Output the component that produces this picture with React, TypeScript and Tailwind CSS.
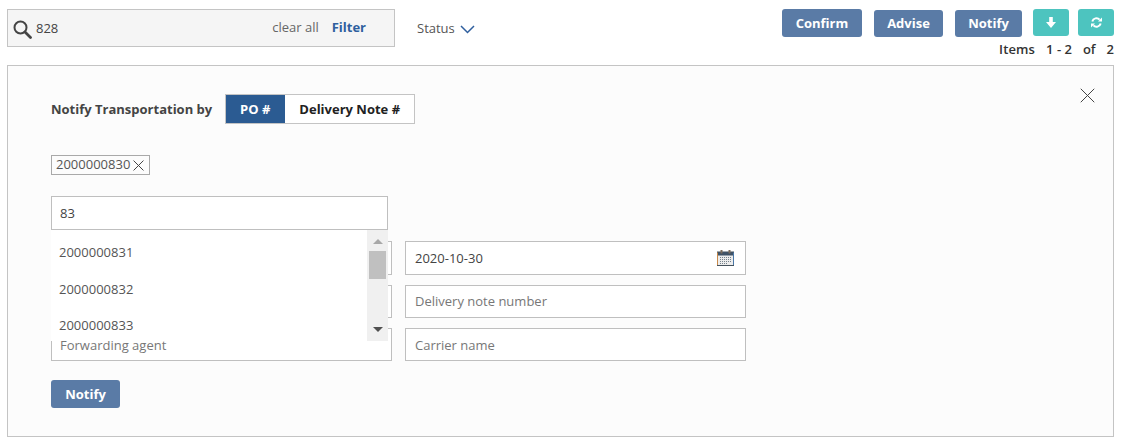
const FONT = "font-['Open_Sans',sans-serif]";

function CalendarIcon() {
  return (
    <svg width="17" height="16" viewBox="0 0 17 16">
      <rect x="0.5" y="2" width="16" height="13.5" fill="#ececec" stroke="#46525c" />
      <path d="M0.5 2.5V15" stroke="#c98a4a" />
      <path d="M16.5 2.5V15" stroke="#4a78a8" />
      <rect x="1" y="2" width="15" height="3.5" fill="#3f5266" />
      <rect x="3.5" y="0" width="2" height="3.5" fill="#7a6a5a" />
      <rect x="11.5" y="0" width="2" height="3.5" fill="#7a6a5a" />
      <path d="M3 7.5h11M3 9.5h11M3 11.5h11M3 13.5h8" stroke="#77838c" strokeDasharray="1 1" />
    </svg>
  );
}

function Cross({ size, className }: { size: number; className?: string }) {
  return (
    <svg width={size} height={size} viewBox="0 0 10 10" className={className}>
      <path d="M0.5 0.5L9.5 9.5M9.5 0.5L0.5 9.5" stroke="currentColor" strokeWidth={10 / size} fill="none" />
    </svg>
  );
}

function ActionButton({ label, className }: { label: string; className: string }) {
  return <button className={`rounded-[3px] bg-[#5a7ba6] text-[13px] font-bold text-white ${className}`}>{label}</button>;
}

function Field({ text, placeholder, icon, className }: { text: string; placeholder?: boolean; icon?: boolean; className: string }) {
  return (
    <div
      className={`flex w-[341px] items-center justify-between border border-[#bfbfbf] bg-white pl-[9px] pr-[11px] text-[13px] ${
        placeholder ? "text-[#777]" : "text-[#444]"
      } ${className}`}
    >
      <span>{text}</span>
      {icon && <CalendarIcon />}
    </div>
  );
}

export default function App() {
  return (
    <div className={`${FONT} h-[446px] w-[1128px] bg-white pl-[7px] pr-[14px] pt-[9px] text-[13px] text-[#444]`}>
      <div className="flex items-start justify-between">
        <div className="flex items-center">
          <div className="flex h-[38px] w-[388px] items-center border border-[#c4c4c4] bg-[#f5f5f5] pl-[5px]">
            <svg width="19" height="19" viewBox="0 0 19 19" className="mt-[2px]">
              <circle cx="7.5" cy="7.5" r="6" fill="none" stroke="#444" strokeWidth="2" />
              <path d="M12 12L17.5 17.5" stroke="#444" strokeWidth="2.8" strokeLinecap="round" />
            </svg>
            <span className="ml-[4px] mt-[2px] flex-1">828</span>
            <span className="text-[#666]">clear all</span>
            <span className="ml-[13px] mr-[28px] font-bold text-[#2f5f9e]">Filter</span>
          </div>
          <span className="ml-[22px] mt-[2px] text-[#555]">Status</span>
          <svg width="15" height="9" viewBox="0 0 15 9" className="ml-[5px] mt-[2px] text-[#2f5f9e]">
            <path d="M1 1L7.5 7.5L14 1" stroke="currentColor" strokeWidth="1.5" fill="none" />
          </svg>
        </div>
        <div className="flex flex-col items-end">
          <div className="flex items-start">
            <ActionButton label="Confirm" className="h-[28px] w-[80px] pt-[1px]" />
            <ActionButton label="Advise" className="ml-[12px] mt-[1px] h-[27px] w-[69px]" />
            <ActionButton label="Notify" className="ml-[12px] mt-[1px] h-[27px] w-[67px]" />
            <button className="ml-[11px] flex h-[27px] w-[36px] items-center justify-center rounded-[3px] bg-[#4dc4bf] text-white">
              <svg width="10" height="11" viewBox="0 0 10 11">
                <path d="M3.2 0H6.8V5H10L5 11L0 5H3.2Z" fill="currentColor" />
              </svg>
            </button>
            <button className="ml-[9px] flex h-[27px] w-[36px] items-center justify-center rounded-[3px] bg-[#4dc4bf] text-white">
              <svg width="11" height="11" viewBox="0 0 11 11">
                <path d="M1.3 4.4A4.3 4.3 0 0 1 8.6 2.6" fill="none" stroke="currentColor" strokeWidth="2" />
                <path d="M7 4.6H11V0.6Z" fill="currentColor" />
                <path d="M9.7 6.6A4.3 4.3 0 0 1 2.4 8.4" fill="none" stroke="currentColor" strokeWidth="2" />
                <path d="M4 6.4H0V10.4Z" fill="currentColor" />
              </svg>
            </button>
          </div>
          <div className="mt-[4px] flex h-[18px] items-center text-[13px] font-semibold text-[#333]">
            <span className="tracking-[0.15px]">Items</span>
            <span className="ml-[11px]">1 - 2</span>
            <span className="ml-[11px]">of</span>
            <span className="ml-[11px]">2</span>
          </div>
        </div>
      </div>

      <div className="relative mt-[6px] h-[372px] w-[1107px] border border-[#c4c4c4] bg-[#fcfcfc] pl-[43px] pt-[28px]">
        <button className="absolute right-[18px] top-[22px] text-[#444]">
          <Cross size={15} />
        </button>
        <div className="flex items-center">
          <span className="pt-[1px] font-bold text-[#444]">Notify Transportation by</span>
          <div className="ml-[13px] flex h-[30px] border border-[#c4c4c4] bg-white">
            <span className="flex w-[59px] items-center justify-center bg-[#2b5b92] pr-[1px] pt-[1px] font-bold text-white">PO #</span>
            <span className="flex w-[129px] items-center justify-center pt-[1px] font-bold text-[#222]">Delivery Note #</span>
          </div>
        </div>

        <div className="mt-[31px] flex h-[20px] w-[99px] items-center border border-[#a9a9a9] pl-[4px] text-[13px] text-[#555]">
          <span>2000000830</span>
          <Cross size={11} className="ml-[3px] text-[#444]" />
        </div>

        <div className="relative mt-[21px] h-[34px] w-[337px] border border-[#bfbfbf] bg-white pl-[8px] leading-[32px]">
          83
          <div className="absolute left-[-1px] top-[33px] z-10 flex h-[111px] w-[337px] bg-white leading-[20px]">
            <div className="flex-1 pl-[8px] pt-[12px] text-[#555]">
              <div className="h-[37px]">2000000831</div>
              <div className="h-[36px]">2000000832</div>
              <div>2000000833</div>
            </div>
            <div className="flex w-[21px] flex-col items-center bg-[#f0f0f0] px-[2px]">
              <div className="mt-[9px] h-0 w-0 border-x-[5px] border-b-[5px] border-x-transparent border-b-[#a8a8a8]" />
              <div className="mt-[7px] h-[28px] w-full bg-[#c0c0c0]" />
              <div className="mt-[48px] h-0 w-0 border-x-[5px] border-t-[5px] border-x-transparent border-t-[#505050]" />
            </div>
          </div>
        </div>

        <div className="mt-[11px] grid w-[695px] grid-cols-[341px_341px] gap-x-[13px] gap-y-[10px]">
          <Field text="" className="h-[34px]" />
          <Field text="2020-10-30" icon className="h-[34px] [&>span]:pt-[1px]" />
          <Field text="" className="h-[33px]" />
          <Field text="Delivery note number" placeholder className="h-[33px]" />
          <Field text="Forwarding agent" placeholder className="h-[33px] !pl-[8px] pt-[2px]" />
          <Field text="Carrier name" placeholder className="h-[33px] pt-[2px]" />
        </div>

        <button className="mt-[19px] h-[28px] w-[69px] rounded-[3px] bg-[#5a7ba6] pt-[1px] font-bold text-white">Notify</button>
      </div>
    </div>
  );
}
